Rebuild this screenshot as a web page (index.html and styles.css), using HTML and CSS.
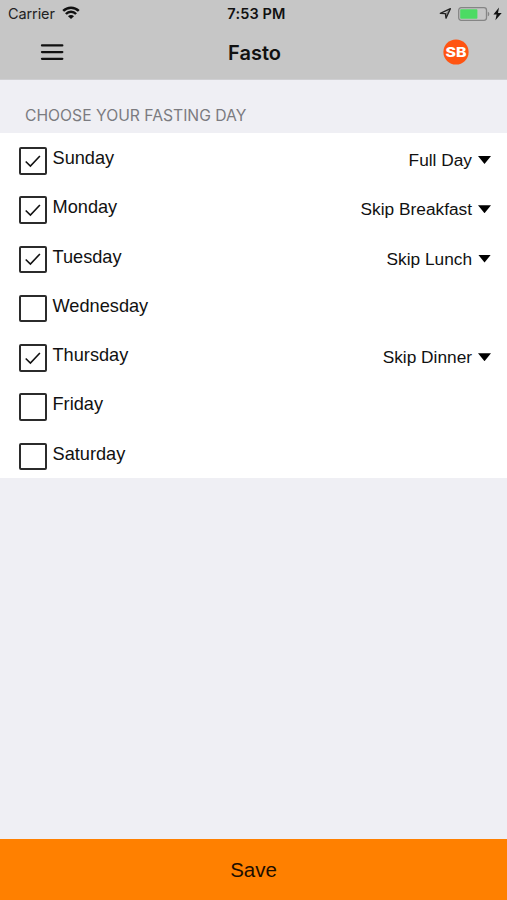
FILE: index.html
```html
<!DOCTYPE html>
<html lang="en">
<head>
<meta charset="utf-8">
<title>Fasto</title>
<link rel="stylesheet" href="styles.css">
</head>
<body>
<div class="app">
  <header class="header">
    <div class="status">
      <div class="status-left">
        <span class="carrier">Carrier</span>
        <svg class="wifi" width="18" height="14" viewBox="0 0 18 14" fill="none" stroke="#111" stroke-width="2.5"><path d="M1.2 4.9a11.2 11.2 0 0 1 15.6 0M3.9 8a7.1 7.1 0 0 1 10.2 0"/><path d="M6 10.3a4 4 0 0 1 6 0L9 13z" fill="#111" stroke="none"/></svg>
      </div>
      <span class="time">7:53 PM</span>
      <div class="status-right">
        <svg width="13" height="13" viewBox="0 0 13 13" fill="none" stroke="#222" stroke-width="1.3" stroke-linejoin="round"><path d="M1.3 6.4 11.4 1.7 7 11.2 6.4 6.6z"/><path d="M11.4 1.7 7 11.2 6.4 6.6z" fill="#222" fill-opacity=".4" stroke="none"/></svg>
        <svg class="battery" width="32" height="14" viewBox="0 0 32 14"><rect x=".7" y=".7" width="27.8" height="12.6" rx="2.5" fill="none" stroke="#858585" stroke-width="1.3"/><rect x="2.2" y="2.2" width="17.2" height="9.6" rx=".8" fill="#4cdb63"/><path d="M29.8 4.7c2 .7 2 3.9 0 4.6z" fill="#858585"/></svg>
        <svg class="bolt" width="9" height="14" viewBox="0 0 9 14"><path d="M6 .6.4 7.6h3.2L2.4 13.2 8.7 5.9H5z" fill="#111"/></svg>
      </div>
    </div>
    <div class="nav">
      <svg class="menu" width="24" height="18" viewBox="0 0 24 18" stroke="#111" stroke-width="2.3" stroke-linecap="round"><path d="M2 2.4h20.3M2 9.1h20.3M2 15.8h20.3"/></svg>
      <h1 class="title">Fasto</h1>
      <svg class="logo" width="26" height="26" viewBox="0 0 26 26"><circle cx="13" cy="13" r="12.6" fill="#ff5412"/><text class="logo-text" x="2.5" y="17.7" textLength="21" lengthAdjust="spacingAndGlyphs">SB</text></svg>
    </div>
  </header>
  <main class="content">
    <h2 class="caption">CHOOSE YOUR FASTING DAY</h2>
    <ul class="days">
      <li class="day"><span class="box"><svg class="check" viewBox="0 0 18 14"><path d="M1.7 7.5 6.4 12 15.9 2"/></svg></span><span class="name">Sunday</span><span class="meal">Full Day</span><span class="arrow"></span></li>
      <li class="day"><span class="box"><svg class="check" viewBox="0 0 18 14"><path d="M1.7 7.5 6.4 12 15.9 2"/></svg></span><span class="name">Monday</span><span class="meal">Skip Breakfast</span><span class="arrow"></span></li>
      <li class="day"><span class="box"><svg class="check" viewBox="0 0 18 14"><path d="M1.7 7.5 6.4 12 15.9 2"/></svg></span><span class="name">Tuesday</span><span class="meal">Skip Lunch</span><span class="arrow"></span></li>
      <li class="day"><span class="box"></span><span class="name">Wednesday</span></li>
      <li class="day"><span class="box"><svg class="check" viewBox="0 0 18 14"><path d="M1.7 7.5 6.4 12 15.9 2"/></svg></span><span class="name">Thursday</span><span class="meal">Skip Dinner</span><span class="arrow"></span></li>
      <li class="day"><span class="box"></span><span class="name">Friday</span></li>
      <li class="day"><span class="box"></span><span class="name">Saturday</span></li>
    </ul>
  </main>
  <button class="save">Save</button>
</div>
</body>
</html>
```
FILE: styles.css
```css
* { box-sizing: border-box; }

body { margin: 0; color: #111; font-family: "Liberation Sans", Arial, sans-serif; }

.app { display: flex; flex-direction: column; height: 900px; background: #efeff4; }

.header { height: 80px; background: #c6c6c6; border-bottom: 1px solid #cfcfd2; font-family: Inter, sans-serif; }

.status { display: grid; grid-template-columns: 1fr auto 1fr; align-items: center; height: 27px; padding: 0 5px 0 8px; }
.status-left { display: flex; align-items: center; gap: 7px; }
.wifi { margin-top: -1px; }
.carrier { font-size: 14.5px; color: #222; letter-spacing: -0.1px; }
.time { font-size: 14.5px; font-weight: 600; letter-spacing: 0.15px; margin-left: 3px; }
.status-right { display: flex; align-items: center; justify-content: flex-end; }
.battery { margin-left: 6px; }
.bolt { margin-left: 3px; }

.nav { display: grid; grid-template-columns: 1fr auto 1fr; align-items: center; height: 50px; padding: 0 38px 0 40px; }
.title { margin: 2px 0 0; font-size: 20px; line-height: 24px; font-weight: 600; }
.logo { justify-self: end; }
.logo-text { fill: #fff; font: 800 13px Inter, sans-serif; }

.content { flex: 1; }
.caption { margin: 0; height: 53px; padding: 26px 0 0 25px; font: 400 15.7px/20px Inter, sans-serif; color: #7b7b80; }

.days { margin: 0; padding: 0; list-style: none; background: #fff; }
.day { display: flex; align-items: flex-start; height: 49.3px; padding: 14px 16px 0 19px; }
.box { display: flex; align-items: center; justify-content: center; width: 27.5px; height: 27.5px; border: 2px solid #2b2b2b; border-radius: 2px; }
.check { width: 18px; height: 14px; fill: none; stroke: #111; stroke-width: 1.6; }
.name { flex: 1; margin-left: 6px; font-size: 18.2px; line-height: 23px; }
.meal { margin-top: 2px; font-size: 17.3px; line-height: 23px; }
.arrow { width: 13px; height: 8px; margin: 9px 0 0 6px; background: #000; clip-path: polygon(0 0, 100% 0, 50% 100%); }

.save { height: 61px; padding: 0; border: 0; background: #ff8000; color: #1c0e00; font: 20.5px/24px "Liberation Sans", Arial, sans-serif; }
```
